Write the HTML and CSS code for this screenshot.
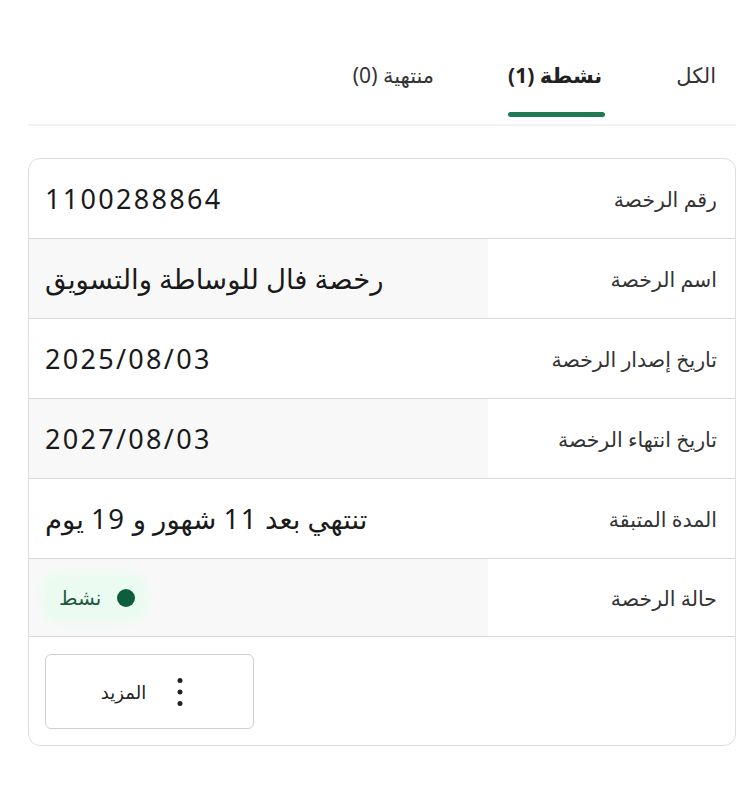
FILE: index.html
```html
<!DOCTYPE html>
<html lang="ar" dir="rtl">
<head>
<meta charset="utf-8">
<link rel="stylesheet" href="styles.css">
</head>
<body>
<div class="page">
  <nav class="tabs">
    <div class="tab">الكل</div>
    <div class="tab active">نشطة (1)</div>
    <div class="tab">منتهية (0)</div>
  </nav>
  <div class="tabs-line"></div>

  <section class="card">
    <div class="row">
      <div class="label">رقم الرخصة</div>
      <div class="value num">1100288864</div>
    </div>
    <div class="row alt">
      <div class="label">اسم الرخصة</div>
      <div class="value">رخصة فال للوساطة والتسويق</div>
    </div>
    <div class="row">
      <div class="label">تاريخ إصدار الرخصة</div>
      <div class="value num">2025/08/03</div>
    </div>
    <div class="row alt">
      <div class="label">تاريخ انتهاء الرخصة</div>
      <div class="value num">2027/08/03</div>
    </div>
    <div class="row">
      <div class="label">المدة المتبقة</div>
      <div class="value">تنتهي بعد <span class="digits">11</span> شهور و <span class="digits">19</span> يوم</div>
    </div>
    <div class="row alt last">
      <div class="label">حالة الرخصة</div>
      <div class="value">
        <span class="badge"><span class="dot"></span><span class="badge-text">نشط</span></span>
      </div>
    </div>
    <div class="actions">
      <button class="more-btn">
        <svg class="kebab" width="6" height="28" viewBox="0 0 6 28" aria-hidden="true">
          <circle cx="3" cy="2.6" r="2.5" fill="#222"/>
          <circle cx="3" cy="14" r="2.5" fill="#222"/>
          <circle cx="3" cy="25.4" r="2.5" fill="#222"/>
        </svg>
        <span>المزيد</span>
      </button>
    </div>
  </section>
</div>
</body>
</html>
```

FILE: styles.css
```css
* { box-sizing: border-box; }
html, body { margin: 0; padding: 0; background: #ffffff; }
body {
  font-family: "Noto Sans", "DejaVu Sans", sans-serif;
  color: #222;
}
.page {
  width: 750px;
  padding: 0 14px 0 28px;
}
.tabs {
  display: flex;
  gap: 74px;
  padding: 58px 20px 0 0;
  height: 124px;
}
.tab {
  font-size: 21px;
  line-height: 34px;
  color: #333;
  position: relative;
  height: 60px;
}
.tab.active {
  font-weight: 700;
  color: #222;
}
.tab.active::after {
  content: "";
  position: absolute;
  left: 0;
  right: -3px;
  top: 54px;
  height: 5px;
  border-radius: 3px;
  background: #1e7a52;
}
.tabs-line {
  height: 2px;
  background: #f2f2f2;
}
.card {
  margin-top: 32px;
  width: 708px;
  border: 1.5px solid #dedede;
  border-radius: 12px;
  overflow: hidden;
}
.row {
  display: grid;
  grid-template-columns: 247px 1fr;
  height: 80px;
  border-bottom: 1.5px solid #d9d9d9;
}
.row.last { height: 78px; }
.label {
  display: flex;
  align-items: center;
  padding-right: 18px;
  font-size: 20.5px;
  color: #333;
}
.value {
  display: flex;
  align-items: center;
  padding-left: 16px;
  font-size: 27.5px;
  color: #1a1a1a;
  direction: rtl;
  justify-content: flex-end;
  white-space: pre;
}
.value.num {
  direction: ltr;
  justify-content: flex-start;
  font-size: 27px;
  letter-spacing: 2.3px;
}
.digits { letter-spacing: 1.5px; }
.row.alt .value { background: #f8f8f8; }
.badge {
  display: inline-flex;
  align-items: center;
  gap: 16px;
  padding: 8px 9px 8px 14px;
  background: #ecfbf1;
  border-radius: 14px;
  box-shadow: 0 0 8px 4px #ecfbf1;
}
.dot {
  width: 18px;
  height: 18px;
  border-radius: 50%;
  background: #0d5e3c;
}
.badge-text {
  font-size: 20px;
  color: #1f5a3e;
}
.actions {
  padding: 17px 16px 16px;
  display: flex;
  justify-content: flex-end;
}
.more-btn {
  width: 209px;
  height: 75px;
  border: 1.5px solid #cfcfcf;
  border-radius: 6px;
  background: #fff;
  display: flex;
  align-items: center;
  justify-content: center;
  gap: 31px;
  font-family: inherit;
  font-size: 18px;
  color: #222;
  padding: 0 15px 0 0;
}
.kebab { display: block; }
```
